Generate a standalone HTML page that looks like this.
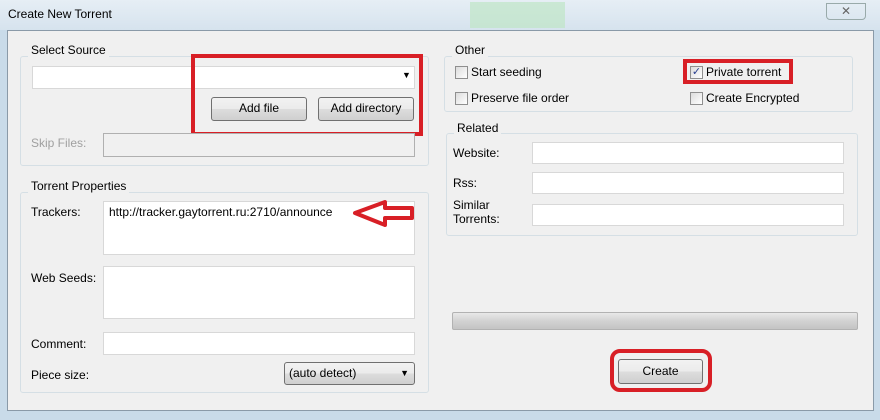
<!DOCTYPE html><html><head><style>
*{box-sizing:border-box}
body{margin:0;width:880px;height:420px;overflow:hidden;background:#c9dbe9;font-family:"Liberation Sans",sans-serif;font-size:12px;color:#000;position:relative}
.a{position:absolute}
.win{left:7px;top:30px;width:867px;height:381px;background:#f0f0f0;border:1px solid #8a9aa8}
.grp{border:1px solid #d5dfe5;border-radius:3px}
.lbl{background:#f0f0f0;padding:0 3px}
.in{background:#fff;border:1px solid #abadb3}
.btn{border:1px solid #707070;border-radius:3px;background:linear-gradient(#f2f2f2,#ebebeb 50%,#dddddd 51%,#cfcfcf);text-align:center;line-height:21px}
.cb{width:13px;height:13px;border:1px solid #8f8f8f;background:linear-gradient(135deg,#dcdcdc,#fff)}
.red{border:4px solid #d81f26}
</style></head><body>
<div class="a" style="left:0;top:0;width:880px;height:30px;background:linear-gradient(#e6eef5,#d6e3ee)"></div>
<div class="a" style="left:470px;top:2px;width:95px;height:26px;background:#bfe6c6;opacity:.7"></div>
<div class="a" style="left:8px;top:7px;font-size:12px">Create New Torrent</div>
<div class="a" style="left:826px;top:3px;width:40px;height:17px;border:1px solid #9aa;border-radius:0 0 4px 4px;text-align:center;color:#666;font-size:12px">✕</div>
<div class="a win"></div>

<div class="a grp" style="left:20px;top:56px;width:409px;height:110px"></div>
<div class="a lbl" style="left:28px;top:43px">Select Source</div>
<div class="a in" style="left:32px;top:66px;width:383px;height:23px;border-color:#d8d8d8"></div>
<div class="a" style="left:402px;top:70px;font-size:9px">▼</div>
<div class="a btn" style="left:211px;top:97px;width:96px;height:24px">Add file</div>
<div class="a btn" style="left:318px;top:97px;width:96px;height:24px">Add directory</div>
<div class="a red" style="left:191px;top:54px;width:232px;height:82px"></div>
<div class="a" style="left:31px;top:136px;color:#a0a0a0">Skip Files:</div>
<div class="a" style="left:103px;top:133px;width:312px;height:24px;border:1px solid #b0b0b0;background:#f0f0f0"></div>

<div class="a grp" style="left:20px;top:192px;width:409px;height:201px"></div>
<div class="a lbl" style="left:28px;top:179px">Torrent Properties</div>
<div class="a" style="left:31px;top:205px">Trackers:</div>
<div class="a in" style="left:103px;top:201px;width:312px;height:54px;border-color:#d8d8d8;padding:3px 5px">http://tracker.gaytorrent.ru:2710/announce</div>
<svg class="a" style="left:350px;top:198px" width="70" height="32"><polygon points="5,15 35,4 35,10 62,10 62,20 35,20 35,27" fill="#fff" stroke="#d81f26" stroke-width="4" stroke-linejoin="round"/></svg>
<div class="a" style="left:31px;top:271px">Web Seeds:</div>
<div class="a in" style="left:103px;top:266px;width:312px;height:53px;border-color:#d8d8d8"></div>
<div class="a" style="left:31px;top:337px">Comment:</div>
<div class="a in" style="left:103px;top:332px;width:312px;height:23px;border-color:#d8d8d8"></div>
<div class="a" style="left:31px;top:368px">Piece size:</div>
<div class="a btn" style="left:284px;top:362px;width:131px;height:23px;text-align:left;padding-left:4px;line-height:21px">(auto detect)<span style="position:absolute;right:5px;font-size:9px">▼</span></div>

<div class="a grp" style="left:444px;top:56px;width:409px;height:56px"></div>
<div class="a lbl" style="left:452px;top:43px">Other</div>
<div class="a cb" style="left:455px;top:66px"></div><div class="a" style="left:471px;top:65px">Start seeding</div>
<div class="a cb" style="left:455px;top:92px"></div><div class="a" style="left:471px;top:91px">Preserve file order</div>
<div class="a cb" style="left:690px;top:66px;text-align:center;line-height:10px;font-size:11px;color:#2a3f8f">✓</div><div class="a" style="left:706px;top:65px">Private torrent</div>
<div class="a red" style="left:683px;top:59px;width:110px;height:25px"></div>
<div class="a cb" style="left:690px;top:92px"></div><div class="a" style="left:706px;top:91px">Create Encrypted</div>

<div class="a grp" style="left:446px;top:133px;width:412px;height:103px"></div>
<div class="a lbl" style="left:454px;top:121px">Related</div>
<div class="a" style="left:453px;top:146px">Website:</div>
<div class="a in" style="left:532px;top:142px;width:312px;height:22px;border-color:#d8d8d8"></div>
<div class="a" style="left:453px;top:176px">Rss:</div>
<div class="a in" style="left:532px;top:172px;width:312px;height:22px;border-color:#d8d8d8"></div>
<div class="a" style="left:453px;top:198px;line-height:14px">Similar<br>Torrents:</div>
<div class="a in" style="left:532px;top:204px;width:312px;height:22px;border-color:#d8d8d8"></div>

<div class="a" style="left:452px;top:312px;width:406px;height:18px;border:1px solid #b2b2b2;border-radius:2px;background:linear-gradient(#e8e8e8,#d2d2d2 50%,#c4c4c4)"></div>
<div class="a btn" style="left:618px;top:359px;width:85px;height:25px;line-height:23px">Create</div>
<div class="a red" style="left:610px;top:349px;width:102px;height:43px;border-radius:10px"></div>
</body></html>
